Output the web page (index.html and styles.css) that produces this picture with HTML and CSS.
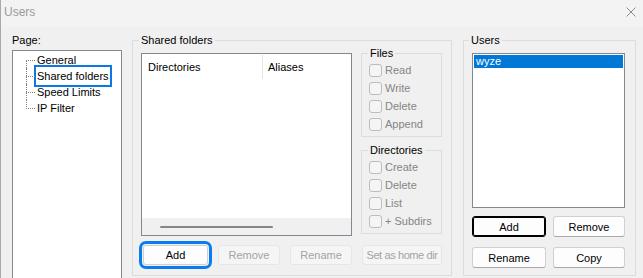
FILE: index.html
```html
<!DOCTYPE html>
<html lang="en">
<head>
    <meta charset="UTF-8">
    <title>Users</title>
    <link rel="stylesheet" href="styles.css">
</head>
<body>
<div class="window">
    <div class="titlebar">
        <span class="title">Users</span>
        <svg class="close" width="10" height="10" viewBox="0 0 10 10"><path d="M0.5 0.5 L9.5 9.5 M9.5 0.5 L0.5 9.5" stroke="#8c8c8c" stroke-width="1" fill="none"/></svg>
    </div>

    <div class="content">
        <div class="pages">
            <div class="page-label">Page:</div>
            <ul class="tree">
                <li>General</li>
                <li><span class="selected">Shared folders</span></li>
                <li>Speed Limits</li>
                <li>IP Filter</li>
            </ul>
        </div>

        <fieldset class="group shared">
            <legend>Shared folders</legend>
            <div class="shared-inner">
                <div class="shared-body">
                    <div class="dir-list">
                        <div class="dir-head">
                            <div class="col col-dir">Directories</div>
                            <div class="col col-alias">Aliases</div>
                        </div>
                        <div class="dir-rows"></div>
                        <div class="hscroll"><div class="thumb"></div></div>
                    </div>
                    <div class="perms">
                        <fieldset class="group sub">
                            <legend>Files</legend>
                            <div class="checks">
                                <div class="check"><span class="box"></span>Read</div>
                                <div class="check"><span class="box"></span>Write</div>
                                <div class="check"><span class="box"></span>Delete</div>
                                <div class="check"><span class="box"></span>Append</div>
                            </div>
                        </fieldset>
                        <fieldset class="group sub dirs">
                            <legend>Directories</legend>
                            <div class="checks">
                                <div class="check"><span class="box"></span>Create</div>
                                <div class="check"><span class="box"></span>Delete</div>
                                <div class="check"><span class="box"></span>List</div>
                                <div class="check"><span class="box"></span>+ Subdirs</div>
                            </div>
                        </fieldset>
                    </div>
                </div>
                <div class="btn-row">
                    <button class="btn focus-ring w-add">Add</button>
                    <button class="btn w-mid" disabled>Remove</button>
                    <button class="btn w-mid" disabled>Rename</button>
                    <button class="btn w-home" disabled>Set as home dir</button>
                </div>
            </div>
        </fieldset>

        <fieldset class="group users">
            <legend>Users</legend>
            <div class="users-inner">
                <div class="user-list">
                    <div class="user-item active">wyze</div>
                </div>
                <div class="user-btns">
                    <button class="btn default">Add</button>
                    <button class="btn">Remove</button>
                    <button class="btn">Rename</button>
                    <button class="btn">Copy</button>
                </div>
            </div>
        </fieldset>
    </div>
</div>
</body>
</html>
```

FILE: styles.css
```css
* {
    box-sizing: border-box;
}

body {
    margin: 0;
    background-color: #f0f0f0;
    font-family: "Liberation Sans", Arial, sans-serif;
    font-size: 11px;
    color: #000;
    overflow: hidden;
}

.window {
    height: 278px;
    border-left: 1px solid #a9a9a9;
}

.titlebar {
    height: 27px;
    display: flex;
    justify-content: space-between;
    align-items: flex-start;
    padding: 5px 7px 0 3px;
    background-color: #f3f3f3;
}

.title {
    font-size: 12px;
    line-height: 14px;
    color: #9b9b9b;
}

.close {
    margin-top: 2px;
}

.content {
    display: flex;
    align-items: flex-start;
    padding: 7px 0 0 11px;
}

/* page tree */
.pages {
    width: 110px;
    margin-right: 10px;
}

.page-label {
    line-height: 13px;
    margin-bottom: 3px;
}

.tree {
    list-style: none;
    margin: 0;
    padding: 1px 0 0 0;
    height: 240px;
    background-color: #fff;
    border: 1px solid #828790;
}

.tree li {
    position: relative;
    line-height: 16px;
    height: 16px;
    padding-left: 24px;
    white-space: nowrap;
}

.tree li::before {
    content: "";
    position: absolute;
    left: 13px;
    top: 8px;
    width: 9px;
    border-top: 1px dotted #7f7f7f;
}

.tree li::after {
    content: "";
    position: absolute;
    left: 13px;
    top: 0;
    height: 16px;
    border-left: 1px dotted #7f7f7f;
}

.tree li:first-child::after {
    top: 8px;
    height: 8px;
}

.tree li:last-child::after {
    height: 9px;
}

.selected {
    display: inline-block;
    outline: 2px solid #0b78e3;
    outline-offset: 1px;
}

/* group boxes */
.group {
    margin: 0;
    padding: 0;
    border: 1px solid #dcdcdc;
    min-width: 0;
}

.group legend {
    margin-left: 6px;
    padding: 0 2px;
    line-height: 13px;
}

.shared {
    width: 320px;
    height: 242px;
}

.shared-inner {
    padding: 6px 9px 9px 8px;
}

.shared-body {
    display: flex;
    gap: 9px;
}

.dir-list {
    width: 211px;
    height: 183px;
    background-color: #fff;
    border: 1px solid #828790;
    display: flex;
    flex-direction: column;
}

.dir-head {
    height: 26px;
    display: flex;
}

.col {
    margin-top: 1px;
    height: 24px;
    line-height: 24px;
}

.col-dir {
    width: 121px;
    padding-left: 6px;
    border-right: 1px solid #e5e5e5;
}

.col-alias {
    padding-left: 5px;
}

.dir-rows {
    flex: 1;
}

.hscroll {
    height: 17px;
    background-color: #f0f0f0;
    padding-top: 8px;
}

.thumb {
    margin-left: 18px;
    width: 113px;
    height: 2px;
    border-radius: 1px;
    background-color: #868686;
}

.perms {
    width: 81px;
    margin-top: -6px;
}

.sub legend {
    margin-left: 6px;
}

.checks {
    padding: 1px 0 3px 7px;
}

.dirs {
    margin-top: 7px;
}

.check {
    height: 18px;
    display: flex;
    align-items: center;
    gap: 3px;
    color: #858585;
    white-space: nowrap;
}

.box {
    width: 13px;
    height: 13px;
    border: 1px solid #bdbdbd;
    border-radius: 3px;
    background-color: #f5f5f5;
}

/* buttons */
.btn {
    font-family: "Liberation Sans", Arial, sans-serif;
    font-size: 11px;
    color: #000;
    padding: 0;
    height: 20px;
    background-color: #fdfdfd;
    border: 1px solid #d0d0d0;
    border-bottom-color: #a8a8a8;
    border-radius: 3px;
    text-align: center;
    white-space: nowrap;
    overflow: hidden;
}

.btn:disabled {
    color: #a3a3a3;
    background-color: #f5f5f5;
    border-color: #e6e6e6;
}

.btn-row {
    display: flex;
    gap: 10px;
    margin-top: 9px;
    padding-left: 2px;
}

.w-add {
    width: 65px;
}

.w-mid {
    width: 62px;
}

.w-home {
    width: 80px;
    letter-spacing: -0.4px;
}

.focus-ring {
    border-color: #cfcfcf;
    outline: 3px solid #0a7cf0;
    outline-offset: 1px;
}

/* users */
.users {
    width: 173px;
    height: 242px;
    margin-left: 11px;
}

.users legend {
    margin-left: 5px;
}

.users-inner {
    padding: 6px 10px 7px 8px;
}

.user-list {
    height: 155px;
    background-color: #fff;
    border: 1px solid #828790;
    padding: 1px;
}

.user-item {
    line-height: 13px;
    padding-left: 2px;
}

.user-item.active {
    background-color: #0078d7;
    color: #fff;
}

.user-btns {
    display: grid;
    grid-template-columns: 74px 72px;
    grid-auto-rows: 21px;
    column-gap: 7px;
    row-gap: 10px;
    margin-top: 8px;
}

.user-btns .btn {
    height: 21px;
}

.btn.default {
    border: 1px solid #000;
    box-shadow: inset 0 0 0 1px #000;
}
```
